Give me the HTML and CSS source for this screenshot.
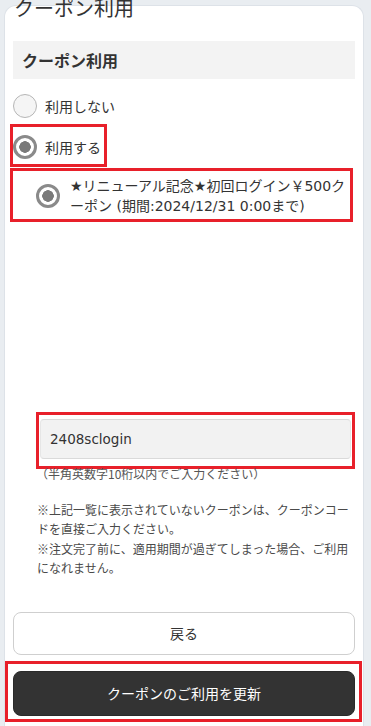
FILE: index.html
```html
<!DOCTYPE html>
<html lang="ja">
<head>
<meta charset="utf-8">
<title>クーポン利用</title>
<link rel="stylesheet" href="styles.css">
</head>
<body>
<div class="card">
  <h1 class="page-title">クーポン利用</h1>
  <h2 class="section-head">クーポン利用</h2>

  <label class="option opt-none">
    <span class="radio off"></span>
    <span class="opt-text">利用しない</span>
  </label>

  <label class="option opt-use hl">
    <span class="radio on"></span>
    <span class="opt-text">利用する</span>
  </label>

  <label class="coupon hl">
    <span class="radio on"></span>
    <span class="coupon-text">★リニューアル記念★初回ログイン￥500クーポン (期間:2024/12/31 0:00まで)</span>
  </label>

  <div class="code-box hl">
    <div class="code-input">2408sclogin</div>
  </div>
  <p class="hint">（半角英数字10桁以内でご入力ください）</p>

  <div class="notes">
    <p>※上記一覧に表示されていないクーポンは、クーポンコードを直接ご入力ください。</p>
    <p>※注文完了前に、適用期間が過ぎてしまった場合、ご利用になれません。</p>
  </div>

  <button class="btn btn-back" type="button">戻る</button>
  <div class="submit-wrap hl">
    <button class="btn btn-submit" type="button">クーポンのご利用を更新</button>
  </div>
</div>
</body>
</html>
```

FILE: styles.css
```css
html, body {
  margin: 0;
  padding: 0;
  background: #e9edf1;
  font-family: "Noto Sans CJK JP", "Noto Sans", sans-serif;
  color: #333;
}

.card {
  box-sizing: border-box;
  width: 360px;
  height: 721px;
  margin: 5px 0 0 4px;
  background: #fff;
  border: 1px solid #dde2e8;
  border-bottom: none;
  border-radius: 12px 12px 0 0;
  padding: 0 8px;
}

.page-title {
  margin: -9px 0 0 1px;
  font-size: 20px;
  line-height: 22px;
  font-weight: 400;
  color: #333;
}

.section-head {
  margin: 22px 0 0;
  height: 38px;
  line-height: 38px;
  padding-left: 9px;
  background: #f3f3f3;
  font-size: 16px;
  font-weight: 700;
  color: #333;
}

.hl {
  border: 3px solid #e8202a;
  box-sizing: border-box;
}

.radio {
  flex: none;
  box-sizing: border-box;
  width: 24px;
  height: 24px;
  border-radius: 50%;
}
.radio.off {
  border: 1px solid #b6b6b6;
  background: #f5f5f5;
}
.radio.on {
  border: 3px solid #8a8a8a;
  background: radial-gradient(circle, #7a7a7a 0 5.5px, #fff 6px);
}

.option {
  display: flex;
  align-items: center;
  font-size: 14px;
}
.opt-text {
  margin-left: 8px;
}

.opt-none {
  margin-top: 15px;
  height: 24px;
}

.opt-use {
  display: inline-flex;
  margin: 6px 0 0 -3px;
  height: 43px;
  padding: 3px 3px 0 0;
}

.coupon {
  display: flex;
  align-items: center;
  width: 343px;
  height: 54px;
  margin: 1px 0 0 -3px;
  padding: 2px 0 0 23px;
  font-size: 14px;
  line-height: 20px;
}
.coupon-text {
  margin-left: 10px;
  color: #333;
  font-family: "DejaVu Sans", "Noto Sans CJK JP", sans-serif;
}

.code-box {
  margin: 190px 0 0 23px;
  height: 57px;
  padding: 4px 1px 0;
}
.code-input {
  box-sizing: border-box;
  height: 40px;
  line-height: 38px;
  padding-left: 9px;
  background: #f2f2f2;
  border: 1px solid #dadada;
  border-left-color: #e6e6e6;
  border-right-color: #e6e6e6;
  border-radius: 4px;
  font-family: "DejaVu Sans", "Noto Sans CJK JP", sans-serif;
  font-size: 13.5px;
  color: #333;
}

.hint {
  margin: -4px 0 0 23px;
  font-size: 12px;
  line-height: 18px;
  color: #555;
}

.notes {
  margin: 17px 0 0 24px;
  font-size: 12px;
  line-height: 19.4px;
  color: #4a4a4a;
}
.notes p {
  margin: 0;
}

.btn {
  display: block;
  box-sizing: border-box;
  width: 100%;
  font-family: inherit;
  font-size: 14px;
  border-radius: 8px;
  cursor: pointer;
}

.btn-back {
  margin-top: 34px;
  height: 43px;
  background: #fff;
  border: 1px solid #cfcfcf;
  color: #333;
}

.submit-wrap {
  margin: 6px -7px 0 -8px;
  height: 61px;
  padding: 7px 4px 0 5px;
}
.btn-submit {
  height: 45px;
  background: #333;
  border: 1px solid #2a2a2a;
  color: #fff;
}
```
